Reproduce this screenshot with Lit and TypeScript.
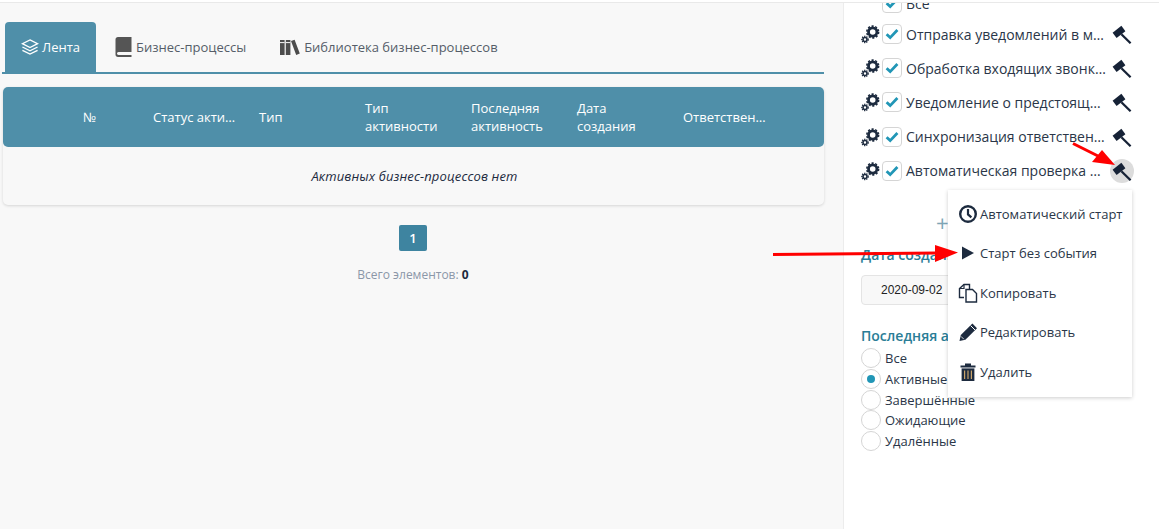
import { LitElement, html, css, svg } from "lit";
import { customElement } from "lit/decorators.js";

const gears = html`<svg class="gears" width="20" height="20" viewBox="0 0 20 20">
  <circle cx="11.7" cy="8" r="4.2" fill="none" stroke="#1d2b3f" stroke-width="2.8"/>
  <circle cx="11.7" cy="8" r="5.9" fill="none" stroke="#1d2b3f" stroke-width="1.6" stroke-dasharray="2.1 1.6"/>
  <circle cx="4" cy="15.5" r="2" fill="none" stroke="#1d2b3f" stroke-width="1.6"/>
  <circle cx="4" cy="15.5" r="3.2" fill="none" stroke="#1d2b3f" stroke-width="1.2" stroke-dasharray="1.3 1"/>
</svg>`;

const hammer = html`<svg class="hammer" width="20" height="20" viewBox="0 0 20 20">
  <path d="M.6 8.8 9.4 1.8 13.4 7.2 4.6 14Z" fill="#162236"/>
  <path d="M9.4 10.2 18.6 19.2" stroke="#162236" stroke-width="2.3" fill="none"/>
</svg>`;

const check = html`<span class="box"><svg width="14" height="12" viewBox="0 0 14 12"><path d="M1.6 6.2 5.2 9.6 12.4 2" fill="none" stroke="#2196b6" stroke-width="2.8"/></svg></span>`;

const rows = [
  "Отправка уведомлений в м…",
  "Обработка входящих звонк…",
  "Уведомление о предстоящ…",
  "Синхронизация ответствен…",
  "Автоматическая проверка …",
];

const menuIcons = [
  svg`<circle cx="10" cy="10" r="7.8" fill="none" stroke="#1d2b3f" stroke-width="2.4"/><path d="M10 5v5.4l3.4 3" fill="none" stroke="#1d2b3f" stroke-width="2.2"/>`,
  svg`<path d="M4 3.5 16 10 4 16.5Z" fill="#1d2b3f"/>`,
  svg`<path d="M6 14.5H1.5V5.5L6 1.5H11.5V6" fill="#fff" stroke="#1d2b3f" stroke-width="1.4"/><path d="M6 1.5V5.5H1.5" fill="none" stroke="#1d2b3f" stroke-width="1.2"/><path d="M8 6.5H14.5L18.5 10.5V19H8Z" fill="#fff" stroke="#1d2b3f" stroke-width="1.4"/>`,
  svg`<path d="M1.5 19 2.8 13 14.4 1.6 19 6.2 7.4 17.8Z" fill="#1d2b3f"/><path d="M12.6 3.6 17 8" stroke="#fff" stroke-width="1"/><path d="M3 14.4 5.8 17.2" stroke="#fff" stroke-width=".8"/>`,
  svg`<path d="M2.5 3.5H17.5V5.4H2.5Z M7 3.5V1.4H13V3.5" fill="#1d2b3f"/><path d="M3.6 6.4H16.4V19H3.6Z" fill="#1d2b3f"/><path d="M6.6 8.4V17M10 8.4V17M13.4 8.4V17" stroke="#c9a36a" stroke-width="1.2"/>`,
];
const menu = ["Автоматический старт", "Старт без события", "Копировать", "Редактировать", "Удалить"];
const radios = ["Все", "Активные", "Завершённые", "Ожидающие", "Удалённые"];

@customElement("app-root")
export class AppRoot extends LitElement {
  static styles = css`
    :host { display: block; position: relative; width: 1159px; height: 529px; overflow: hidden; background: #f8f8f8;
      font-family: "Open Sans", sans-serif; font-size: 13px; color: #1d2b3f; }
    * { box-sizing: border-box; }
    .top { height: 3px; background: #fff; border-bottom: 1px solid #e9e9e9; }
    .page { display: grid; grid-template-columns: 843px 1fr; height: 526px; }

    .main { padding: 19px 19px 0 2px; }
    .tabs { display: flex; height: 52px; border-bottom: 2px solid #4f8fa9; padding-left: 3px; }
    .tab { display: flex; align-items: center; gap: 4px; height: 50px; padding: 0 16px 0 19px; color: #555d68; }
    .tab.on { background: #4f8fa9; color: #fff; border-radius: 4px 4px 0 0; width: 91px; padding-left: 16px; gap: 3px; }
    .tab.lib { padding-left: 18px; }

    .table { margin: 13px 0 0 1px; border-radius: 5px; box-shadow: 0 1px 3px rgba(0,0,0,.14); }
    .thead { display: grid; grid-template-columns: 68px 70px repeat(6, 106px) 1fr; height: 60px; align-items: center;
      background: #4f8fa9; color: #fff; border-radius: 5px; line-height: 18px; }
    .thead div { padding-left: 12px; }
    .empty { height: 58px; display: flex; align-items: center; justify-content: center; font-style: italic; color: #1d2b3f; letter-spacing: .14px; padding-left: 2px; }
    .pager { display: flex; flex-direction: column; align-items: center; margin-top: 20px; gap: 15px; font-size: 12px; color: #8b97a8; }
    .page-btn { width: 28px; height: 26px; background: #3e84a0; color: #fff; border-radius: 2px; display: flex; align-items: center; justify-content: center; font-weight: 600; font-size: 13px; }
    .pager b { color: #1d2b3f; font-weight: 700; }

    .side { background: #fff; border-left: 1px solid #ececec; overflow: hidden; padding-left: 17px; }
    .row { display: flex; align-items: center; height: 34.2px; }
    .row.all { height: 20px; margin-top: -10px; margin-bottom: 4px; }
    .gears { flex: none; width: 20px; margin-right: 1px; }
    .all .spacer { width: 21px; }
    .box { flex: none; width: 20px; height: 20px; border: 1px solid #d5d5d5; border-radius: 4px; display: flex; align-items: center; justify-content: center; background: #fff; }
    .lbl { margin-left: 4px; width: 206px; font-size: 14px; white-space: nowrap; color: #2a3648; }
    .hammer-wrap { position: relative; display: flex; width: 20px; height: 20px; }
    .hammer-wrap.on::before { content: ""; position: absolute; left: -2px; top: -2px; width: 24px; height: 24px; border-radius: 50%; background: #dcdcdc; }
    .hammer-wrap svg { position: relative; margin: 0; }

    .plus { margin: 24px 0 0 75px; height: 20px; font-size: 22px; line-height: 20px; color: #7fa5b5; }
    .h { color: #2a7d96; font-size: 14px; font-weight: 600; white-space: nowrap; line-height: 20px; }
    .date-h { margin-top: 13px; }
    .date { margin-top: 10px; width: 200px; height: 30px; border: 1px solid #e4e4e4; border-radius: 4px; background: #f8f8f8; font-family: "Liberation Sans", sans-serif; color: #222; display: flex; align-items: center; padding-left: 19px; font-size: 12px; }
    .last-h { margin-top: 21px; }
    .radio { display: flex; align-items: center; height: 20.8px; gap: 4px; color: #2a3648; }
    .radios { margin-top: 1.6px; }
    .dot { flex: none; width: 20px; height: 20px; border: 1px solid #d5d5d5; border-radius: 50%; background: #fff; display: flex; align-items: center; justify-content: center; }
    .dot.on::after { content: ""; width: 8px; height: 8px; background: #2196b6; border-radius: 50%; }

    .menu { position: absolute; left: 948px; top: 190px; width: 184px; height: 207px; background: #fff; box-shadow: 0 1px 4px rgba(0,0,0,.2); padding-top: 4px; }
    .mi { display: flex; align-items: center; gap: 2px; height: 39.5px; padding-left: 10px; color: #2a3648; }
    .arrows { position: absolute; left: 0; top: 0; pointer-events: none; }
  `;

  render() {
    return html`
      <div class="top"></div>
      <div class="page">
        <div class="main">
          <div class="tabs">
            <div class="tab on">
              <svg width="19" height="18" viewBox="0 0 19 18"><path d="M9.5 1.5 17.5 5.5 9.5 9.5 1.5 5.5Z M1.5 9 9.5 13 17.5 9 M1.5 12.5 9.5 16.5 17.5 12.5" fill="none" stroke="#fff" stroke-width="1.4"/></svg>
              Лента
            </div>
            <div class="tab">
              <svg width="17" height="20" viewBox="0 0 17 20"><path d="M3 0H16.5V15H3.5C2.5 15 2 15.8 2 16.5S2.6 18 3.5 18H16.5V20H3C1.4 20 .5 18.8 .5 17.5V2.5C.5 1 1.5 0 3 0Z" fill="#555"/></svg>
              Бизнес-процессы
            </div>
            <div class="tab lib">
              <svg width="20" height="16" viewBox="0 0 20 16"><path d="M0 1H4.6V16H0Z M5.8 1H10.4V16H5.8Z M11 2 14.6.8 19.8 14.6 16.2 16Z" fill="#4c4c4c"/><path d="M0 3.6H4.6M5.8 3.6H10.4" stroke="#f8f8f8"/></svg>
              Библиотека бизнес-процессов
            </div>
          </div>
          <div class="table">
            <div class="thead">
              <div></div><div>№</div><div>Статус акти…</div><div>Тип</div><div>Тип<br />активности</div>
              <div>Последняя<br />активность</div><div>Дата<br />создания</div><div>Ответствен…</div><div></div>
            </div>
            <div class="empty">Активных бизнес-процессов нет</div>
          </div>
          <div class="pager">
            <div class="page-btn">1</div>
            <div>Всего элементов: <b>0</b></div>
          </div>
        </div>
        <div class="side">
          <div class="row all"><span class="spacer"></span>${check}<span class="lbl">Все</span></div>
          ${rows.map((r, i) => html`<div class="row">${gears}${check}<span class="lbl">${r}</span>
            <span class="hammer-wrap ${i === 4 ? "on" : ""}">${hammer}</span></div>`)}
          <div class="plus">+</div>
          <div class="h date-h">Дата создания</div>
          <div class="date">2020-09-02</div>
          <div class="h last-h">Последняя активность</div>
          <div class="radios">
            ${radios.map((r, i) => html`<div class="radio"><span class="dot ${i === 1 ? "on" : ""}"></span>${r}</div>`)}
          </div>
        </div>
      </div>
      <div class="menu">
        ${menu.map((m, i) => html`<div class="mi"><svg width="20" height="20" viewBox="0 0 20 20">${menuIcons[i]}</svg>${m}</div>`)}
      </div>
      <svg class="arrows" width="1159" height="529" viewBox="0 0 1159 529">
        <path d="M773 254.5 938 253" stroke="#f00" stroke-width="3" fill="none"/>
        <path d="M935 245 958 252.5 935 262Z" fill="#f00"/>
        <path d="M1073 143.5 1098 156" stroke="#f00" stroke-width="3" fill="none"/>
        <path d="M1102 150 1115 165 1092 162Z" fill="#f00"/>
      </svg>
    `;
  }
}
